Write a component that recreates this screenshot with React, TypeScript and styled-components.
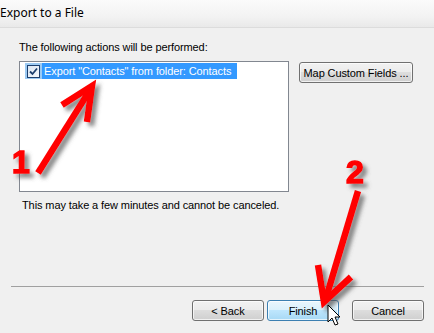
import React from "react";
import styled, { createGlobalStyle } from "styled-components";

const Global = createGlobalStyle`
  html, body { margin: 0; padding: 0; background: #f0f0f0; }
  * { box-sizing: border-box; }
`;

const Window = styled.div`
  position: relative;
  width: 434px;
  height: 333px;
  overflow: hidden;
  display: flex;
  flex-direction: column;
  background: #f0f0f0;
  font-family: "Liberation Sans", Arial, sans-serif;
  font-size: 11px;
  letter-spacing: -0.1px;
  color: #000;
`;

const TitleBar = styled.div`
  height: 28px;
  flex: none;
  display: flex;
  align-items: flex-start;
  padding: 4px 0 0 0;
  background: linear-gradient(to bottom, #fbfbfb 0%, #f3f3f3 60%, #e9e9e9 100%);
  border-bottom: 1px solid #dcdcdc;
  font-family: "Noto Sans", "Open Sans", sans-serif;
  font-size: 12px;
  letter-spacing: 0;
  color: #000;
`;

const Body = styled.div`
  flex: 1;
  display: flex;
  flex-direction: column;
  padding: 0 10px 0 11px;
`;

const Section = styled.div`
  display: flex;
  flex-direction: column;
  padding-left: 8px;
`;

const Heading = styled.div`
  margin-top: 13px;
  line-height: 13px;
  height: 13px;
`;

const ListRow = styled.div`
  display: flex;
  align-items: flex-start;
  margin-top: 7px;
`;

const ListBox = styled.div`
  width: 270px;
  height: 131px;
  background: #fff;
  border: 1px solid #828790;
  padding: 1px 5px;
`;

const Item = styled.div`
  display: flex;
  align-items: center;
  height: 16px;
`;

const CheckCell = styled.div`
  width: 17px;
  height: 16px;
  display: flex;
  align-items: center;
  justify-content: center;
  background: #9ccaf3;
`;

const Check = styled.div`
  width: 13px;
  height: 13px;
  border: 1px solid #1c3f6e;
  background: linear-gradient(135deg, #dbe6f3, #f4f8fc);
  display: flex;
  align-items: center;
  justify-content: center;
`;

const ItemText = styled.div<{ $selected?: boolean }>`
  height: 16px;
  line-height: 16px;
  padding: 0 6px 0 2px;
  background: ${(p) => (p.$selected ? "#3399ff" : "transparent")};
  color: ${(p) => (p.$selected ? "#fff" : "#000")};
  white-space: nowrap;
`;

const Button = styled.button<{ $hover?: boolean; $w: number }>`
  width: ${(p) => p.$w}px;
  height: 21px;
  padding: 0;
  font: inherit;
  letter-spacing: inherit;
  color: #000;
  white-space: nowrap;
  border-radius: 3px;
  border: 1px solid ${(p) => (p.$hover ? "#3c7fb1" : "#707070")};
  background: ${(p) =>
    p.$hover
      ? "linear-gradient(to bottom, #eaf6fd 0%, #d9f0fc 50%, #bee6fd 50%, #a7d9f5 100%)"
      : "linear-gradient(to bottom, #f2f2f2 0%, #ebebeb 50%, #dddddd 50%, #cfcfcf 100%)"};
  box-shadow: inset 0 0 0 1px rgba(255, 255, 255, 0.7);
  flex: none;
`;

const MapButton = styled(Button)`
  margin-left: 10px;
  margin-top: 1px;
`;

const Note = styled.div`
  margin-top: 7px;
  padding-left: 3px;
  line-height: 13px;
`;

const Separator = styled.div`
  margin-top: auto;
  height: 1px;
  background: #a0a0a0;
`;

const ButtonRow = styled.div`
  display: flex;
  justify-content: flex-end;
  margin-top: 13px;
  margin-bottom: 12px;
  gap: 3px;
`;

const CancelButton = styled(Button)`
  margin-left: 10px;
`;

const Overlay = styled.svg`
  position: absolute;
  left: 0;
  top: 0;
  pointer-events: none;
`;

const CheckMark = () => (
  <svg width="9" height="9" viewBox="0 0 9 9">
    <path d="M1 4.5 L3.5 7 L8 1.5" fill="none" stroke="#1c3f6e" strokeWidth="1.8" />
  </svg>
);

export default function App() {
  return (
    <>
      <Global />
      <Window>
        <TitleBar>Export to a File</TitleBar>
        <Body>
          <Section>
            <Heading>The following actions will be performed:</Heading>
            <ListRow>
              <ListBox>
                <Item>
                  <CheckCell>
                    <Check>
                      <CheckMark />
                    </Check>
                  </CheckCell>
                  <ItemText $selected>Export "Contacts" from folder: Contacts</ItemText>
                </Item>
              </ListBox>
              <MapButton $w={114}>Map Custom Fields ...</MapButton>
            </ListRow>
            <Note>This may take a few minutes and cannot be canceled.</Note>
          </Section>
          <Separator />
          <ButtonRow>
            <Button $w={72}>&lt; Back</Button>
            <Button $w={72} $hover>
              Finish
            </Button>
            <CancelButton $w={72}>Cancel</CancelButton>
          </ButtonRow>
        </Body>
        <Overlay width="434" height="333" viewBox="0 0 434 333">
          <defs>
            <filter id="sh" x="-20%" y="-20%" width="160%" height="160%">
              <feDropShadow dx="4" dy="4" stdDeviation="2" floodColor="#555" floodOpacity="0.7" />
            </filter>
          </defs>
          <g filter="url(#sh)" fill="none" stroke="#ff0000" strokeWidth="6.5" strokeLinecap="butt" strokeLinejoin="miter">
            <line x1="38" y1="173" x2="90" y2="90" />
            <polyline points="62,105 92,86 87,122" />
            <line x1="358" y1="191" x2="326" y2="298" />
            <polyline points="318,265 324,302 351,277" />
          </g>
          <g filter="url(#sh)" fill="#ff0000" stroke="#ff0000" strokeWidth="1.5" fontFamily="'Liberation Sans', Arial, sans-serif" fontWeight="bold" fontSize="32">
            <text x="12" y="173">1</text>
            <text x="346" y="183">2</text>
          </g>
          <path
            d="M328 305 L328 322 L332 318 L335 325 L338 324 L335 317 L340 317 Z"
            fill="#fff"
            stroke="#000"
            strokeWidth="1"
            strokeLinejoin="round"
          />
        </Overlay>
      </Window>
    </>
  );
}
